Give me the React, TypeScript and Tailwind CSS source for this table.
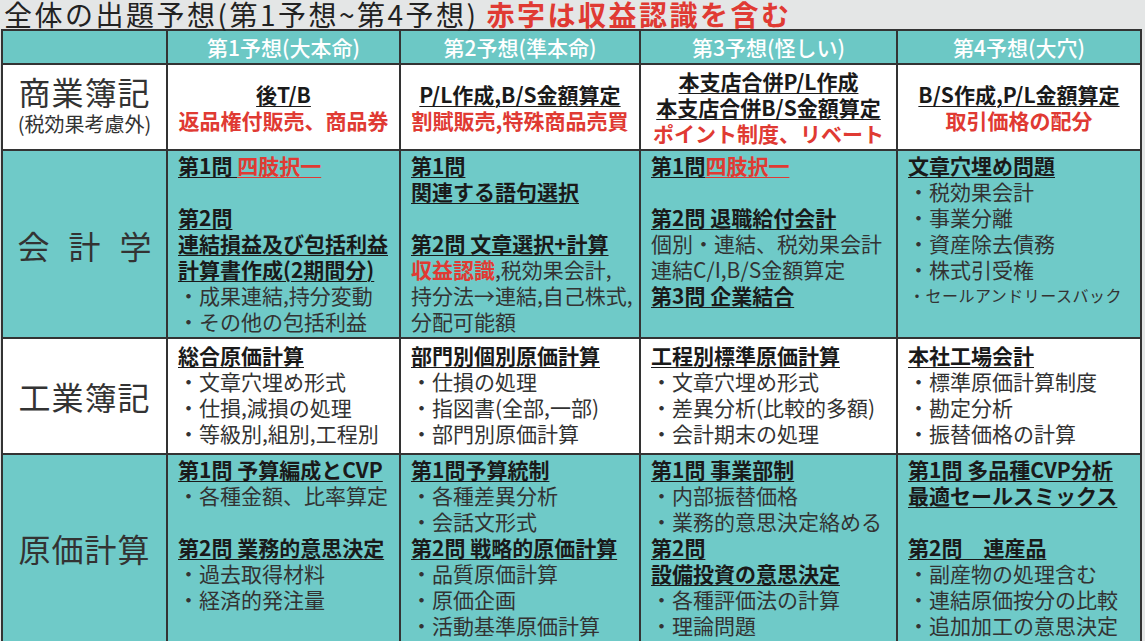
import React from "react";

type Seg = { t: string; red?: boolean; bold?: boolean };
type Line = { segs: Seg[]; bold?: boolean; ul?: boolean; small?: boolean } | null;

const b = (t: string, red?: boolean): Line => ({ segs: [{ t, red }], bold: true, ul: true });
const r = (t: string): Line => ({ segs: [{ t }] });
const red = (t: string): Line => ({ segs: [{ t, red: true }], bold: true });

const HEADERS = ["第1予想(大本命)", "第2予想(準本命)", "第3予想(怪しい)", "第4予想(大穴)"];

const ROWS: { cells: Line[][]; pad: string; teal: boolean }[] = [
  {
    teal: false,
    pad: "",
    cells: [
      [b("後T/B"), red("返品権付販売、商品券")],
      [b("P/L作成,B/S金額算定"), red("割賦販売,特殊商品売買")],
      [b("本支店合併P/L作成"), b("本支店合併B/S金額算定"), red("ポイント制度、リベート")],
      [b("B/S作成,P/L金額算定"), red("取引価格の配分")],
    ],
  },
  {
    teal: true,
    pad: "pt-[1px]",
    cells: [
      [
        { segs: [{ t: "第1問 " }, { t: "四肢択一", red: true }], bold: true, ul: true },
        null,
        b("第2問"),
        b("連結損益及び包括利益"),
        b("計算書作成(2期間分)"),
        r("・成果連結,持分変動"),
        r("・その他の包括利益"),
      ],
      [
        b("第1問"),
        b("関連する語句選択"),
        null,
        b("第2問 文章選択+計算"),
        { segs: [{ t: "収益認識", red: true, bold: true }, { t: ",税効果会計," }] },
        r("持分法→連結,自己株式,"),
        r("分配可能額"),
      ],
      [
        { segs: [{ t: "第1問" }, { t: "四肢択一", red: true }], bold: true, ul: true },
        null,
        b("第2問 退職給付会計"),
        r("個別・連結、税効果会計"),
        r("連結C/I,B/S金額算定"),
        b("第3問 企業結合"),
      ],
      [
        b("文章穴埋め問題"),
        r("・税効果会計"),
        r("・事業分離"),
        r("・資産除去債務"),
        r("・株式引受権"),
        { segs: [{ t: "・セールアンドリースバック" }], small: true },
      ],
    ],
  },
  {
    teal: false,
    pad: "pt-[3px]",
    cells: [
      [b("総合原価計算"), r("・文章穴埋め形式"), r("・仕損,減損の処理"), r("・等級別,組別,工程別")],
      [b("部門別個別原価計算"), r("・仕損の処理"), r("・指図書(全部,一部)"), r("・部門別原価計算")],
      [b("工程別標準原価計算"), r("・文章穴埋め形式"), r("・差異分析(比較的多額)"), r("・会計期末の処理")],
      [b("本社工場会計"), r("・標準原価計算制度"), r("・勘定分析"), r("・振替価格の計算")],
    ],
  },
  {
    teal: true,
    pad: "pt-[1px]",
    cells: [
      [b("第1問 予算編成とCVP"), r("・各種金額、比率算定"), null, b("第2問 業務的意思決定"), r("・過去取得材料"), r("・経済的発注量")],
      [
        b("第1問予算統制"),
        r("・各種差異分析"),
        r("・会話文形式"),
        b("第2問 戦略的原価計算"),
        r("・品質原価計算"),
        r("・原価企画"),
        r("・活動基準原価計算"),
      ],
      [
        b("第1問 事業部制"),
        r("・内部振替価格"),
        r("・業務的意思決定絡める"),
        b("第2問"),
        b("設備投資の意思決定"),
        r("・各種評価法の計算"),
        r("・理論問題"),
      ],
      [
        b("第1問 多品種CVP分析"),
        b("最適セールスミックス"),
        null,
        b("第2問　連産品"),
        r("・副産物の処理含む"),
        r("・連結原価按分の比較"),
        r("・追加加工の意思決定"),
      ],
    ],
  },
];

function TextLine({ line }: { line: Line }) {
  if (!line) return <div className="h-[26px]" />;
  return (
    <div
      className={`whitespace-nowrap h-[26px] ${
        line.small ? "text-[16px] tracking-[0.5px] pl-[1px]" : "text-[21px]"
      } ${line.bold ? "font-bold" : "font-normal"}`}
    >
      {line.segs.map((s, i) => (
        <span
          key={i}
          className={`${s.red ? "text-[#e03a33]" : line.bold ? "text-[#1a1a1a]" : "text-[#333333]"} ${
            s.bold ? "font-bold" : ""
          } ${line.ul ? "underline decoration-1 underline-offset-[3px]" : ""}`}
        >
          {s.t}
        </span>
      ))}
    </div>
  );
}

function RowLabel({ index }: { index: number }) {
  const base = "flex flex-col items-center justify-center text-[#333333] font-normal";
  if (index === 0)
    return (
      <div className={`${base} bg-white pb-[2px]`}>
        <div className="text-[32px] leading-[36px] tracking-[1px]">商業簿記</div>
        <div className="text-[20px] leading-[30px]">(税効果考慮外)</div>
      </div>
    );
  if (index === 1)
    return (
      <div className={`${base} bg-[#6fcac8] flex-row gap-[19px] pt-[2px]`}>
        <span className="text-[32px] leading-[40px]">会</span>
        <span className="text-[32px] leading-[40px]">計</span>
        <span className="text-[32px] leading-[40px]">学</span>
      </div>
    );
  if (index === 2)
    return (
      <div className={`${base} bg-white`}>
        <span className="text-[32px] leading-[40px] tracking-[1px]">工業簿記</span>
      </div>
    );
  return (
    <div className={`${base} bg-[#6fcac8]`}>
      <span className="text-[32px] leading-[40px] tracking-[1px]">原価計算</span>
    </div>
  );
}

export default function App() {
  return (
    <div className="w-[1145px] h-[641px] overflow-hidden bg-[#e4e6e6] font-['Noto_Sans_CJK_JP','Noto_Sans',sans-serif]">
      <div className="h-[29px] pl-[4px] flex items-center whitespace-nowrap">
        <span className="text-[28px] leading-[29px] text-[#222222] tracking-[2.5px]">全体の出題予想(第1予想~第4予想)</span>
        <span className="text-[28px] leading-[29px] font-bold text-[#e03a33] ml-[8px] tracking-[2.5px]">赤字は収益認識を含む</span>
      </div>
      <div className="ml-[1px] w-[1141px] h-[612px] border-x-2 border-t-2 border-[#333333] bg-[#333333] grid grid-cols-[163px_231px_238px_255px_242px] grid-rows-[32px_84px_186px_114px_186px] gap-[2px]">
        <div className="bg-[#6cc8c5]" />
        {HEADERS.map((h) => (
          <div
            key={h}
            className="bg-[#6cc8c5] flex items-center justify-center text-white text-[21px] leading-[30px] font-medium"
          >
            {h}
          </div>
        ))}
        {ROWS.map((row, ri) => (
          <React.Fragment key={ri}>
            <RowLabel index={ri} />
            {row.cells.map((lines, ci) => (
              <div
                key={ci}
                className={`${row.teal ? "bg-[#6fcac8]" : "bg-white"} ${
                  ri === 0 ? "flex flex-col items-center justify-center" : `pl-[10px] ${row.pad}`
                } leading-[26px]`}
              >
                {lines.map((l, li) => (
                  <TextLine key={li} line={l} />
                ))}
              </div>
            ))}
          </React.Fragment>
        ))}
      </div>
    </div>
  );
}
